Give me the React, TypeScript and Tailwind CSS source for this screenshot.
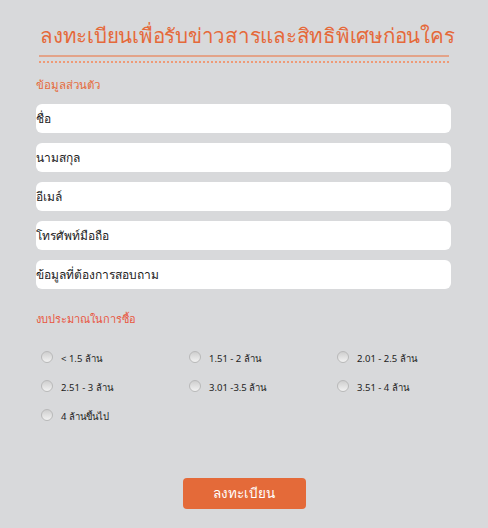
const BUDGETS = ["< 1.5 ล้าน", "1.51 - 2 ล้าน", "2.01 - 2.5 ล้าน", "2.51 - 3 ล้าน", "3.01 -3.5 ล้าน", "3.51 - 4 ล้าน", "4 ล้านขึ้นไป"];

const FIELDS = ["ชื่อ", "นามสกุล", "อีเมล์", "โทรศัพท์มือถือ", "ข้อมูลที่ต้องการสอบถาม"];

export default function App() {
  return (
    <div className="h-[528px] w-[488px] overflow-hidden bg-[#d8d9db] font-['Noto_Sans','Liberation_Sans',sans-serif]">
      <div className="px-[36px] pt-[18px]">
        <h1 className="whitespace-nowrap px-[4px] text-center text-[20.5px] leading-[34px] font-normal text-[#e5693a] tracking-[-0.25px]">ลงทะเบียนเพื่อรับข่าวสารและสิทธิพิเศษก่อนใคร</h1>
        <div className="mx-[3px] mt-[3px] h-[2px] bg-[#e3a389]" />
        <div className="mx-[3px] mt-[4px] border-t-2 border-dotted border-[#ef9a76]" />

        <div className="mt-[12px] text-[11.5px] leading-[20px] text-[#e5693a]">ข้อมูลส่วนตัว</div>
        <div className="mt-[9px] flex w-[415px] flex-col gap-[10px]">
          {FIELDS.map((f) => (
            <input key={f} placeholder={f} className="h-[29px] rounded-[6px] bg-white text-[12px] text-[#222] outline-none placeholder:text-[#222]" />
          ))}
        </div>

        <div className="mt-[20px] text-[11px] leading-[20px] text-[#e8563f]">งบประมาณในการซื้อ</div>
        <div className="mt-[20px] grid grid-cols-[148px_148px_148px] gap-y-[9px] pl-[5px]">
          {BUDGETS.map((b) => (
            <label key={b} className="flex h-[20px] items-center gap-[8px] text-[9.5px] text-[#222]">
              <span className="h-[12px] w-[12px] shrink-0 -translate-y-[2px] rounded-full border border-[#b9b9b9] bg-gradient-to-b from-[#cfcfcf] to-[#f2f2f2]" />
              <span>{b}</span>
            </label>
          ))}
        </div>

        <div className="mt-[51px] flex justify-center">
          <button className="h-[31px] w-[123px] rounded-[4px] bg-[#e46a39] text-[13.5px] text-white">ลงทะเบียน</button>
        </div>
      </div>
    </div>
  );
}
